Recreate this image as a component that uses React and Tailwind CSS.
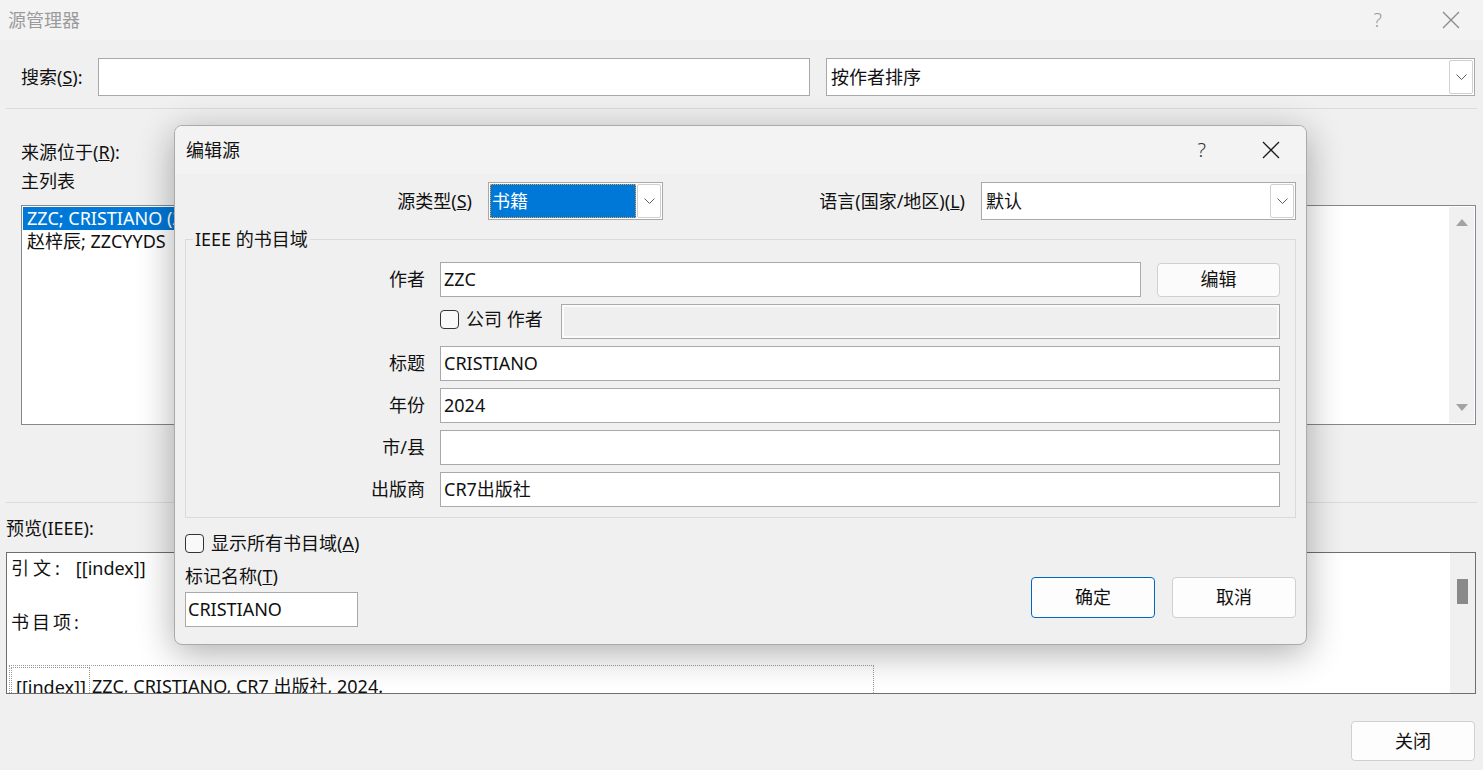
import React from "react";

const Chevron = () => (
  <svg width="11" height="6" viewBox="0 0 11 6" fill="none">
    <path d="M0.5 0.5 L5.5 5.5 L10.5 0.5" stroke="#5f5f5f" strokeWidth="1" />
  </svg>
);

const CloseIcon = ({ color = "#1a1a1a" }) => (
  <svg width="18" height="18" viewBox="0 0 18 18" fill="none">
    <path d="M1 1 L17 17 M17 1 L1 17" stroke={color} strokeWidth="1.3" />
  </svg>
);

const DropButton = () => (
  <div className="w-[24px] self-stretch my-[1px] mr-[1px] border border-[#d0d0d0] rounded-[2px] bg-white flex items-center justify-center">
    <Chevron />
  </div>
);

const Field = ({ label, value }) => (
  <div className="flex items-center h-[35px]">
    <div className="w-[224px] text-right">{label}</div>
    <div className="ml-[15px] flex-1 h-full border border-[#a9a9a9] bg-white px-[3px] flex items-center">
      {value}
    </div>
  </div>
);

const Checkbox = () => (
  <div className="w-[19px] h-[19px] border border-[#333] rounded-[4px] bg-[#f9f9f9]" />
);

const UpArrow = () => (
  <svg width="12" height="8" viewBox="0 0 12 8">
    <path d="M0 8 L6 1 L12 8 Z" fill="#a3a3a3" />
  </svg>
);

const DownArrow = () => (
  <svg width="12" height="8" viewBox="0 0 12 8">
    <path d="M0 0 L6 7 L12 0 Z" fill="#a3a3a3" />
  </svg>
);

const EditSourceDialog = () => (
  <div className="absolute left-[174px] top-[125px] w-[1133px] h-[520px] rounded-[8px] border border-[#aaaaaa] bg-[#f0f0f0] shadow-[0_8px_36px_rgba(0,0,0,0.32)] overflow-hidden flex flex-col">
    <div className="h-[48px] shrink-0 bg-[#f3f3f3] flex items-center pl-[11px]">
      <span className="flex-1">编辑源</span>
      <span className="text-[20px] text-[#333] mr-[56px] font-light">?</span>
      <div className="mr-[26px]">
        <CloseIcon />
      </div>
    </div>

    <div className="flex-1 px-[10px]">
      {/* type / language */}
      <div className="mt-[8px] flex items-center h-[38px]">
        <div className="w-[287px] text-right">
          源类型(<span className="underline">S</span>)
        </div>
        <div className="ml-[16px] w-[175px] h-full border border-[#a9a9a9] bg-white flex items-stretch">
          <div className="m-[1px] flex-1 bg-[#0078d7] text-white px-[2px] flex items-center outline-1 outline-dotted outline-[#f0a040] -outline-offset-1">
            书籍
          </div>
          <DropButton />
        </div>
        <div className="flex-1 text-right pr-[16px]">
          语言(国家/地区)(<span className="underline">L</span>)
        </div>
        <div className="w-[315px] h-full border border-[#a9a9a9] bg-white flex items-stretch">
          <div className="flex-1 px-[4px] flex items-center">默认</div>
          <DropButton />
        </div>
      </div>

      {/* group box */}
      <fieldset className="mt-[7px] border border-[#dadada] px-[15px] pb-[10px] pt-[11px] h-[291px] min-w-0">
        <legend className="ml-[-8px] px-[2px] leading-[24px]">IEEE 的书目域</legend>
        <div className="flex flex-col gap-[7px]">
          <div className="flex items-center h-[35px]">
            <div className="w-[224px] text-right">作者</div>
            <div className="ml-[15px] flex-1 h-full border border-[#a9a9a9] bg-white px-[3px] flex items-center">
              ZZC
            </div>
            <div className="ml-[16px] w-[123px] h-[34px] border border-[#d0d0d0] rounded-[4px] bg-[#fbfbfb] flex items-center justify-center">
              编辑
            </div>
          </div>
          <div className="flex items-center h-[35px]">
            <div className="w-[239px]" />
            <div className="-mt-[4px] flex items-center">
              <Checkbox />
              <span className="ml-[7px]">公司 作者</span>
            </div>
            <div className="ml-[18px] flex-1 h-full border border-[#a9a9a9] bg-[#efefef] shadow-[inset_0_0_0_2px_#fafafa]" />
          </div>
          <Field label="标题" value="CRISTIANO" />
          <Field label="年份" value="2024" />
          <Field label="市/县" value="" />
          <Field label="出版商" value="CR7出版社" />
        </div>
      </fieldset>

      {/* bottom */}
      <div className="mt-[14px] flex items-center h-[22px]">
        <Checkbox />
        <span className="ml-[7px]">
          显示所有书目域(<span className="underline">A</span>)
        </span>
      </div>
      <div className="flex">
        <div className="flex flex-col">
          <div className="mt-[10px] leading-[24px]">
            标记名称(<span className="underline">T</span>)
          </div>
          <div className="mt-[4px] w-[173px] h-[35px] border border-[#a9a9a9] bg-white px-[2px] flex items-center">
            CRISTIANO
          </div>
        </div>
        <div className="ml-auto mt-[23px] flex gap-[17px]">
          <div className="w-[124px] h-[41px] rounded-[4px] border border-[#0067c0] bg-[#fdfdfd] flex items-center justify-center">
            确定
          </div>
          <div className="w-[124px] h-[41px] rounded-[4px] border border-[#d0d0d0] bg-[#fdfdfd] flex items-center justify-center">
            取消
          </div>
        </div>
      </div>
    </div>
  </div>
);

export default function App() {
  return (
    <div className="relative w-[1483px] h-[770px] overflow-hidden bg-[#f0f0f0] text-[18px] text-[#111] [font-family:'Noto_Sans','Noto_Sans_CJK_SC',sans-serif]">
      {/* title bar */}
      <div className="h-[40px] bg-[#f3f3f3] flex items-center pl-[8px]">
        <span className="flex-1 text-[#9b9b9b]">源管理器</span>
        <span className="text-[20px] text-[#9b9b9b] mr-[60px] font-light">?</span>
        <div className="mr-[23px]">
          <CloseIcon color="#8a8a8a" />
        </div>
      </div>

      {/* search row */}
      <div className="mt-[18px] h-[38px] flex items-center pl-[21px]">
        <div className="w-[77px]">
          搜索(<span className="underline">S</span>):
        </div>
        <div className="w-[712px] h-full border border-[#a9a9a9] bg-white" />
        <div className="ml-[16px] w-[649px] h-full border border-[#a9a9a9] bg-white flex items-stretch">
          <div className="flex-1 px-[4px] flex items-center">按作者排序</div>
          <DropButton />
        </div>
      </div>

      <div className="mt-[12px] mx-[6px] h-px bg-[#dcdcdc]" />

      {/* sources */}
      <div className="mt-[31px] pl-[21px] leading-[24px]">
        来源位于(<span className="underline">R</span>):
      </div>
      <div className="mt-[5px] pl-[21px] leading-[24px]">主列表</div>
      <div className="mt-[12px] flex pl-[21px] pr-[7px] h-[220px]">
        <div className="w-[660px] border border-[#828790] bg-white p-[1px]">
          <div className="h-[23px] bg-[#0078d7] text-white px-[4px] flex items-center">
            ZZC; CRISTIANO (2024)
          </div>
          <div className="h-[23px] px-[4px] flex items-center">赵梓辰; ZZCYYDS</div>
        </div>
        <div className="w-[120px]" />
        <div className="flex-1 border border-[#828790] bg-white flex justify-end">
          <div className="w-[25px] m-[1px] bg-[#f0f0f0] flex flex-col items-center justify-between py-[11px]">
            <UpArrow />
            <DownArrow />
          </div>
        </div>
      </div>

      <div className="mt-[77px] mx-[6px] h-px bg-[#dcdcdc]" />

      {/* preview */}
      <div className="mt-[13px] pl-[6px] leading-[24px]">预览(IEEE):</div>
      <div className="mt-[12px] mx-[6px] mr-[7px] h-[142px] border border-[#6e6e6e] bg-white flex overflow-hidden">
        <div className="flex-1 pl-[4px] pt-[3px] flex flex-col">
          <div className="leading-[24px] flex">
            <span className="tracking-[4px]">引文:</span>
            <span className="ml-[12px]">[[index]]</span>
          </div>
          <div className="mt-[30px] leading-[24px] tracking-[3px]">书目项:</div>
          <div className="mt-[31px] ml-[-2px] w-[865px] border border-dotted border-[#9a9a9a] p-[1px] flex shrink-0">
            <div className="w-[79px] border border-dotted border-[#9a9a9a] px-[4px] pt-[4px] leading-[30px]">
              [[index]]
            </div>
            <div className="flex-1 px-[2px] pt-[4px] leading-[30px]">
              ZZC, CRISTIANO, CR7 出版社, 2024.
            </div>
          </div>
        </div>
        <div className="w-[25px] bg-[#f0f0f0] flex justify-center pt-[26px]">
          <div className="w-[11px] h-[25px] bg-[#8a8a8a]" />
        </div>
      </div>

      <div className="mt-[27px] flex justify-end pr-[8px]">
        <div className="w-[124px] h-[40px] rounded-[4px] border border-[#d0d0d0] bg-[#fdfdfd] flex items-center justify-center">
          关闭
        </div>
      </div>

      <EditSourceDialog />
    </div>
  );
}
